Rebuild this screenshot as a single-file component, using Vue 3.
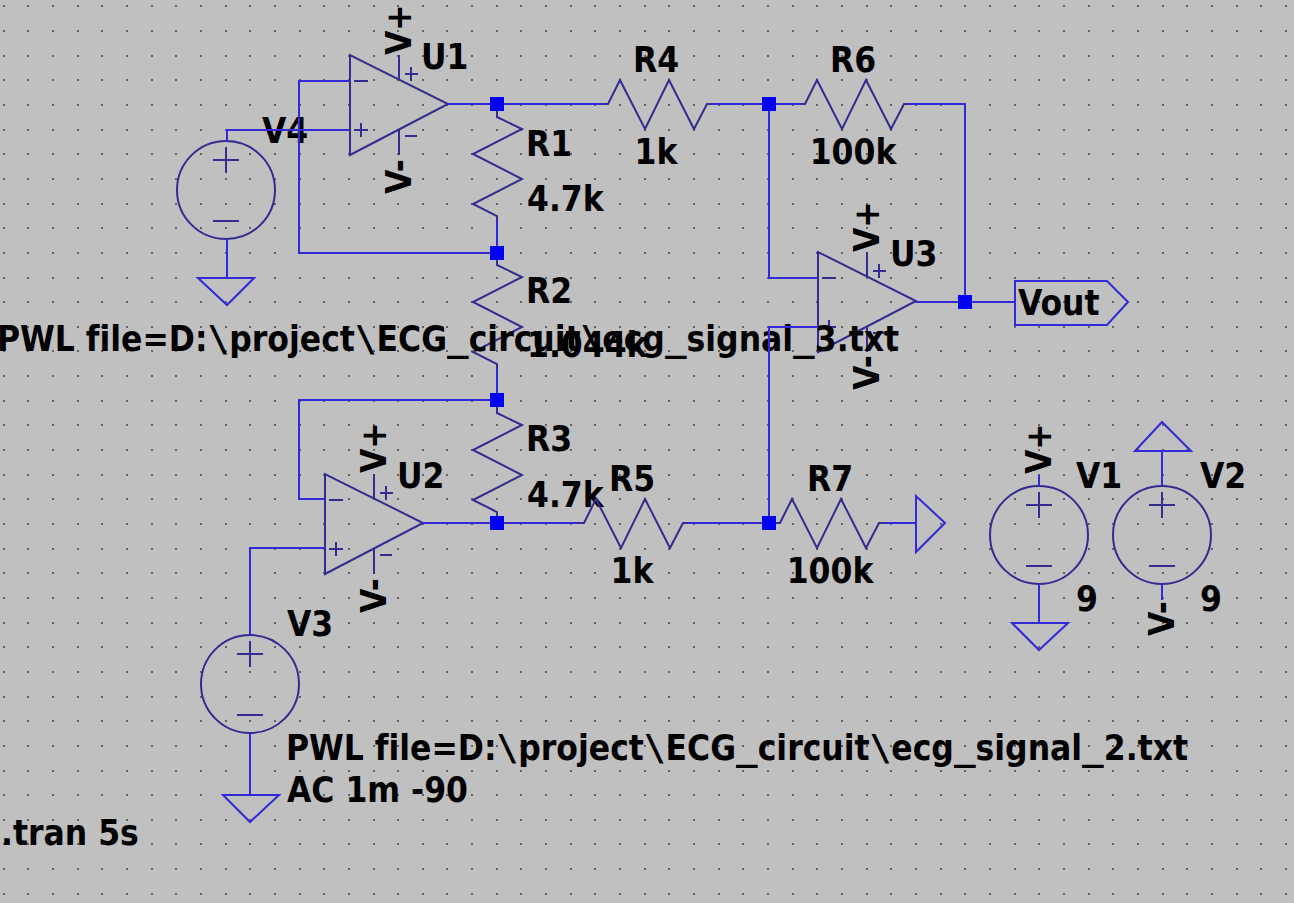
<script setup>
// Grid dots, one per schematic snap point
const gridDots = (() => {
  let d = ''
  for (let row = 0; row < 37; row++) {
    for (let col = 0; col < 53; col++) {
      d += `M${Math.round(2.6 + 24.66 * col)} ${Math.round(6.4 + 24.65 * row)}h2`
    }
  }
  return d
})()

const opamps = [
  { id: 'U1', x: 350, y: 105 },
  { id: 'U2', x: 325, y: 524 },
  { id: 'U3', x: 818, y: 302 },
]

const sources = [
  { id: 'V4', x: 226, y: 190 },
  { id: 'V3', x: 250, y: 684 },
  { id: 'V1', x: 1039, y: 535 },
  { id: 'V2', x: 1162, y: 535 },
]

const verticalResistors = [
  { id: 'R1', x: 497, y: 104 },
  { id: 'R2', x: 497, y: 252 },
  { id: 'R3', x: 497, y: 400 },
]

const horizontalResistors = [
  { id: 'R4', x: 608, y: 104 },
  { id: 'R6', x: 805, y: 104 },
  { id: 'R5', x: 584, y: 523 },
  { id: 'R7', x: 780, y: 523 },
]

const nodes = [
  [497, 104], [769, 104], [497, 253], [965, 302], [497, 400], [497, 523], [769, 523],
]

const labels = [
  { t: 'U1', x: 421, y: 69 },
  { t: 'V4', x: 262, y: 143 },
  { t: 'R1', x: 526, y: 156 },
  { t: '4.7k', x: 527, y: 211 },
  { t: 'R2', x: 526, y: 303 },
  { t: '1.044k', x: 527, y: 357 },
  { t: 'R3', x: 526, y: 451 },
  { t: '4.7k', x: 527, y: 507 },
  { t: 'U2', x: 397, y: 488 },
  { t: 'U3', x: 890, y: 266 },
  { t: 'V3', x: 287, y: 636 },
  { t: 'V1', x: 1076, y: 488 },
  { t: '9', x: 1076, y: 611 },
  { t: 'V2', x: 1200, y: 488 },
  { t: '9', x: 1200, y: 611 },
  { t: 'Vout', x: 1018, y: 315 },
  { t: 'AC 1m -90', x: 287, y: 802 },
  { t: '.tran 5s', x: 1, y: 845 },
]

const centredLabels = [
  { t: 'R4', x: 656, y: 72 },
  { t: '1k', x: 656, y: 164 },
  { t: 'R6', x: 853, y: 72 },
  { t: '100k', x: 853, y: 164 },
  { t: 'R5', x: 632, y: 491 },
  { t: '1k', x: 632, y: 583 },
  { t: 'R7', x: 830, y: 491 },
  { t: '100k', x: 830, y: 583 },
]

const supplyLabels = [
  { t: 'V+', x: 411, y: 55 },
  { t: 'V-', x: 411, y: 194 },
  { t: 'V+', x: 386, y: 473 },
  { t: 'V-', x: 386, y: 613 },
  { t: 'V+', x: 879, y: 252 },
  { t: 'V-', x: 879, y: 390 },
  { t: 'V+', x: 1051, y: 474 },
  { t: 'V-', x: 1174, y: 636 },
]

// Path separators and underscores are set in a wide monospace cut
const splitPath = (s) => s.split(/([\\_])/).map((t) => ({ t, mark: t === '\\' || t === '_' }))
const signal2 = splitPath('PWL file=D:\\project\\ECG_circuit\\ecg_signal_2.txt')
const signal3 = splitPath('PWL file=D:\\project\\ECG_circuit\\ecg_signal_3.txt')
</script>

<template>
  <main class="sheet">
    <svg class="schematic" viewBox="0 0 1294 903" role="img" aria-label="Instrumentation amplifier schematic">
      <path class="dots" :d="gridDots" />

      <g class="text">
        <text v-for="(l, i) in labels" :key="i" :x="l.x" :y="l.y">{{ l.t }}</text>
        <text v-for="(l, i) in centredLabels" :key="'c' + i" class="centred" :x="l.x" :y="l.y">{{ l.t }}</text>
        <text
          v-for="(l, i) in supplyLabels"
          :key="'s' + i"
          :transform="`translate(${l.x} ${l.y}) rotate(-90)`"
        >{{ l.t }}</text>
        <text x="286" y="760"><tspan v-for="(p, i) in signal2" :key="i" :class="{ mark: p.mark }">{{ p.t }}</tspan></text>
      </g>

      <g class="symbol">
        <g v-for="u in opamps" :key="u.id" :transform="`translate(${u.x} ${u.y})`">
          <path d="M0 -50V50L98 -1Z" />
          <path d="M49 -50V-25M49 25V50" />
          <path d="M4 -24H18M4 25H18M11 18V32M55 -31H68M61 -38V-24M55 31H67" />
        </g>
        <g v-for="s in sources" :key="s.id" :transform="`translate(${s.x} ${s.y})`">
          <circle cx="0" cy="0" r="49" />
          <path d="M-13 -30H13M0 -43V-17M-13 31H13" />
        </g>
        <path
          v-for="r in verticalResistors"
          :key="r.id"
          :transform="`translate(${r.x} ${r.y})`"
          d="M0 0V13L25 25L-24 50L25 75L-24 100L0 112V120"
        />
        <path
          v-for="r in horizontalResistors"
          :key="r.id"
          :transform="`translate(${r.x} ${r.y})`"
          d="M-8 0H0L12 -24L37 25L61 -24L86 25L99 0H107"
        />
      </g>

      <g class="text">
        <text x="-3" y="351"><tspan v-for="(p, i) in signal3" :key="i" :class="{ mark: p.mark }">{{ p.t }}</tspan></text>
      </g>

      <g class="wire">
        <path d="M227 142V130H350M497 253H299V81H350" />
        <path d="M448 104H604M712 104H801M909 104H965V302" />
        <path d="M497 221V253M497 369V400" />
        <path d="M769 104V278H818M769 523V327H818M916 302H1015" />
        <path d="M497 400H299V499H325M325 548H250V635" />
        <path d="M423 523H578M688 523H778M885 523H916" />
        <path d="M227 239V278M250 733V795M1039 584V623M1162 451V486M1039 475V486M1162 584V600" />
        <path d="M198 278H254L227 305Z" />
        <path d="M223 795H279L250 822Z" />
        <path d="M1012 623H1068L1039 650Z" />
        <path d="M1135 451H1191L1162 422Z" />
        <path d="M916 496V552L945 523Z" />
        <path d="M1015 281H1107L1128 302L1107 325H1015Z" />
      </g>

      <rect v-for="([x, y], i) in nodes" :key="i" class="node" :x="x - 7" :y="y - 7" width="14" height="14" />
    </svg>
  </main>
</template>

<style>
body {
  margin: 0;
  background: #c0c0c0;
}
</style>

<style scoped>
.sheet {
  background: #c0c0c0;
  overflow: hidden;
}
.schematic {
  display: block;
  width: 100%;
  height: auto;
}
.dots {
  stroke: #626262;
  stroke-width: 2;
}
.text {
  fill: #000;
  font-family: "DejaVu Sans Condensed", "DejaVu Sans", sans-serif;
  font-size: 35px;
  font-weight: 700;
  font-variant-ligatures: none;
}
.mark {
  font-family: "DejaVu Sans Mono", monospace;
  font-size: 36px;
}
.centred {
  text-anchor: middle;
}
.symbol {
  fill: none;
  stroke: #342c90;
  stroke-width: 2;
}
.wire {
  fill: none;
  stroke: #3229d8;
  stroke-width: 2;
}
.node {
  fill: #0000fa;
}
</style>
